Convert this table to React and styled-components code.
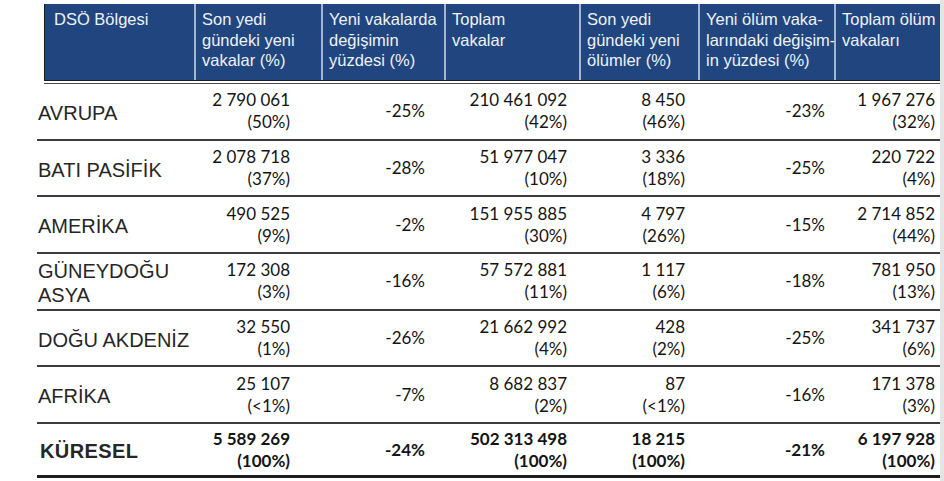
import React from 'react';
import styled, { createGlobalStyle } from 'styled-components';

const GlobalStyle = createGlobalStyle`
  body {
    margin: 0;
    background: #fff;
  }
`;

const Page = styled.div`
  width: 944px;
  height: 481px;
  box-sizing: border-box;
  padding: 4px 4px 0 37px;
  overflow: hidden;
  background: linear-gradient(to right, #fff 940px, #e4e4e4 940px);
`;

const Table = styled.div`
  width: 903px;
  background: #fff;
`;

const HeaderRow = styled.div`
  margin-left: 7px;
  display: grid;
  grid-template-columns: 149px 127px 123px 135px 119px 136px 107px;
  height: 77px;
  box-sizing: border-box;
  background: #21467f;
  border-left: 1px solid #1b1b1b;
  border-bottom: 1px solid #1b1b1b;
`;

const HeadCell = styled.div`
  padding: 5px 4px 0 ${(p) => (p.$first ? 9 : 6)}px;
  border-left: ${(p) => (p.$first ? 'none' : '2px solid #a3b5cf')};
  font-family: 'Liberation Sans', Arial, sans-serif;
  font-size: 16.5px;
  line-height: 20.5px;
  color: #eef2f8;
  white-space: nowrap;
`;

const HeadGap = styled.div`
  margin: 2px 0 0 7px;
  border-top: 1px solid #4a4a4a;
`;

const BodyRow = styled.div`
  display: grid;
  grid-template-columns: 175px 78px 135px 142px 118px 140px 110px;
  padding-right: 5px;
  height: ${(p) => (p.$total ? 54 : 56.7)}px;
  box-sizing: border-box;
  align-items: center;
  border-bottom: ${(p) => (p.$total ? '3px solid #1e1e1e' : '2px solid #3d3d3d')};
  font-weight: ${(p) => (p.$total ? 700 : 400)};
`;

const Region = styled.div`
  font-family: 'Liberation Sans', Arial, sans-serif;
  font-size: 20px;
  line-height: 24px;
  color: #262626;
  padding: 3px 0 0 ${(p) => (p.$total ? 3 : 1)}px;
  letter-spacing: ${(p) => (p.$total ? '0.4px' : '0')};
`;

const Num = styled.div`
  font-family: Lato, 'Open Sans', sans-serif;
  font-size: 17px;
  line-height: 22px;
  color: #141414;
  text-align: right;
  white-space: nowrap;
`;

const regions = [
  ['AVRUPA', '2 790 061', '(50%)', '-25%', '210 461 092', '(42%)', '8 450', '(46%)', '-23%', '1 967 276', '(32%)'],
  ['BATI PASİFİK', '2 078 718', '(37%)', '-28%', '51 977 047', '(10%)', '3 336', '(18%)', '-25%', '220 722', '(4%)'],
  ['AMERİKA', '490 525', '(9%)', '-2%', '151 955 885', '(30%)', '4 797', '(26%)', '-15%', '2 714 852', '(44%)'],
  ['GÜNEYDOĞU\nASYA', '172 308', '(3%)', '-16%', '57 572 881', '(11%)', '1 117', '(6%)', '-18%', '781 950', '(13%)'],
  ['DOĞU AKDENİZ', '32 550', '(1%)', '-26%', '21 662 992', '(4%)', '428', '(2%)', '-25%', '341 737', '(6%)'],
  ['AFRİKA', '25 107', '(<1%)', '-7%', '8 682 837', '(2%)', '87', '(<1%)', '-16%', '171 378', '(3%)'],
];

const total = ['KÜRESEL', '5 589 269', '(100%)', '-24%', '502 313 498', '(100%)', '18 215', '(100%)', '-21%', '6 197 928', '(100%)'];

const headers = [
  ['DSÖ Bölgesi'],
  ['Son yedi', 'gündeki yeni', 'vakalar (%)'],
  ['Yeni vakalarda', 'değişimin', 'yüzdesi (%)'],
  ['Toplam', 'vakalar'],
  ['Son yedi', 'gündeki yeni', 'ölümler (%)'],
  ['Yeni ölüm vaka-', 'larındaki değişim-', 'in yüzdesi (%)'],
  ['Toplam ölüm', 'vakaları'],
];

const Row = ({ data, total }) => (
  <BodyRow $total={total}>
    <Region $total={total}>
      {data[0].split('\n').map((l, i) => (
        <div key={i}>{l}</div>
      ))}
    </Region>
    <Num>{data[1]}<br />{data[2]}</Num>
    <Num>{data[3]}</Num>
    <Num>{data[4]}<br />{data[5]}</Num>
    <Num>{data[6]}<br />{data[7]}</Num>
    <Num>{data[8]}</Num>
    <Num>{data[9]}<br />{data[10]}</Num>
  </BodyRow>
);

const App = () => (
  <Page>
    <GlobalStyle />
    <Table>
      <HeaderRow>
        {headers.map((h, i) => (
          <HeadCell key={i} $first={i === 0}>
            {h.map((l, j) => (
              <div key={j}>{l}</div>
            ))}
          </HeadCell>
        ))}
      </HeaderRow>
      <HeadGap />
      {regions.map((r, i) => (
        <Row key={i} data={r} />
      ))}
      <Row data={total} total />
    </Table>
  </Page>
);

export default App;
